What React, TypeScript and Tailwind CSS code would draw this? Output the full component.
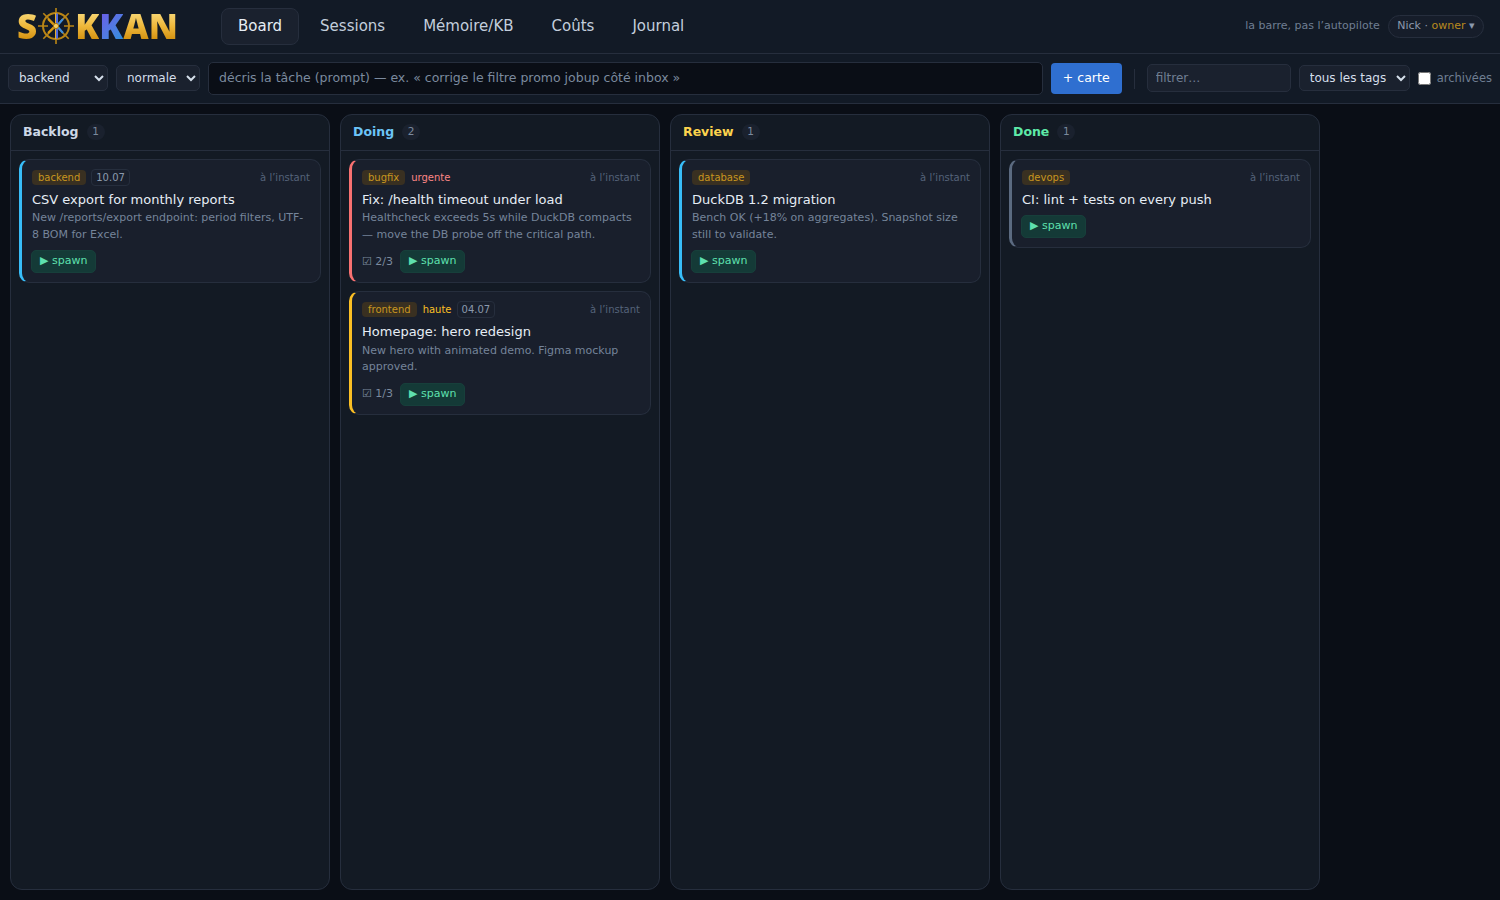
import React from "react";

const gold = "bg-gradient-to-b from-[#f7d672] via-[#eeb83a] to-[#d4930f] bg-clip-text text-transparent";

const Logo = () => (
  <div className="flex items-center w-[160px] h-[26px] text-[35px] leading-[26px] font-extrabold select-none -mt-[1px]" style={{ fontFamily: '"Open Sans", sans-serif' }}>
    <span className={`${gold} w-[22px]`}>S</span>
    <svg width="38" height="38" viewBox="0 0 38 38" className="shrink-0 -my-[6px]">
      <g stroke="#b98516" strokeWidth="1.4" fill="none">
        <circle cx="19" cy="19" r="13" strokeWidth="2" />
        <path d="M19 1v36M1 19h36M6.3 6.3l25.4 25.4M31.7 6.3L6.3 31.7" strokeWidth="1.6" />
      </g>
      <rect x="11" y="17.8" width="16" height="2.4" fill="#12192a" />
      <path d="M19 6v26" stroke="#e6ad2a" strokeWidth="2" />
      <path d="M20 6.5v25" stroke="#4f6be0" strokeWidth="2" />
      <path d="M20 19l6-7M20 19l6 7" stroke="#3d8fe0" strokeWidth="2" />
      <path d="M18 19l-7-7M18 19l-7 7" stroke="#d99a14" strokeWidth="2" />
      <circle cx="19" cy="19" r="2.6" fill="#f5cf63" stroke="#a8750f" />
    </svg>
    <span className={gold}>K</span>
    <span className="bg-gradient-to-br from-[#6a5ae8] to-[#2a8fdc] bg-clip-text text-transparent">K</span>
    <span className={gold}>AN</span>
  </div>
);

type CardT = {
  tag: string;
  prio?: string;
  prioCls?: string;
  date?: string;
  title: string;
  desc?: string;
  check?: string;
  bar: string;
};

const Card = ({ c }: { c: CardT }) => (
  <div className={`rounded-[10px] border border-[#262e3d] border-l-[3px] bg-[#191f2c] pl-[10px] pr-[10px] pt-[9px] pb-[8.8px] ${c.bar}`}>
    <div className="flex items-center gap-[6px] h-[17px] text-[10px]">
      <span className="rounded-[4px] bg-[#393021] text-[#c8961f] px-[6px] h-[15px] leading-[15px]">{c.tag}</span>
      {c.prio && <span className={c.prioCls}>{c.prio}</span>}
      {c.date && <span className="-ml-[1px] rounded-[4px] border border-[#262e3d] text-[#8b99ad] px-[4px] h-[17px] leading-[15px]">{c.date}</span>}
      <span className="ml-auto text-[#55637a]">à l’instant</span>
    </div>
    <div className="mt-[5px] text-[13px] leading-[18px] text-[#e6edf5]">{c.title}</div>
    {c.desc && <div className="mt-[1.45px] text-[11px] leading-[16.5px] text-[#75849a]">{c.desc}</div>}
    <div className={`flex items-center gap-[7px] ${c.desc ? "mt-[6.95px]" : "mt-[6px]"} -ml-[1px]`}>
      {c.check && <span className="text-[11px] text-[#7b8a9e] ml-[1px]">☑ {c.check}</span>}
      <span className="rounded-[5px] bg-[#143a37] border border-[#173f3b] text-[#5ee0ae] text-[11px] h-[23px] leading-[20px] px-[8px]">▶ spawn</span>
    </div>
  </div>
);

const Column = ({ name, color, cards }: { name: string; color: string; cards: CardT[] }) => (
  <div className="w-[320px] shrink-0 rounded-[12px] border border-[#262e3d] bg-[#131a24] flex flex-col">
    <div className="h-[36px] shrink-0 border-b border-[#262e3d] flex items-center pl-[12px] pb-[1px] gap-[8px]">
      <span className={`text-[12.5px] font-bold ${color}`}>{name}</span>
      <span className="w-[18px] h-[16px] rounded-full bg-[#1a212e] text-[#7b8a9e] text-[10.5px] leading-[14px] text-center">{cards.length}</span>
    </div>
    <div className="flex flex-col gap-[8px] p-[8px]">
      {cards.map((c) => <Card key={c.title} c={c} />)}
    </div>
  </div>
);

const selectCls = "h-[26px] mb-[1px] rounded-[5px] border border-[#262e3d] bg-[#1a212e] text-[#d5dfeb] text-[12px] pl-[6px] pb-[1px]";

export default function App() {
  return (
    <div className="min-h-[900px] h-[900px] bg-[#0a0e16] flex flex-col" style={{ fontFamily: '"DejaVu Sans", sans-serif' }}>
      <header className="h-[54px] shrink-0 bg-[#121a26] border-b border-[#262e3d] flex items-center pl-[17px] pr-[16px]">
        <Logo />
        <nav className="ml-[44px] flex items-center gap-[4px] text-[15px] text-[#c3cedc]">
          <span className="h-[37px] leading-[34px] px-[16px] rounded-[8px] bg-[#1a212e] border border-[#262e3d] text-[#e6edf5]">Board</span>
          <span className="px-[17px] pb-[1px]">Sessions</span>
          <span className="px-[17px] pb-[1px]">Mémoire/KB</span>
          <span className="px-[17px] pb-[1px]">Coûts</span>
          <span className="px-[17px] pb-[1px]">Journal</span>
        </nav>
        <span className="ml-auto text-[11px] text-[#6f7e92] pb-[1px]">la barre, pas l’autopilote</span>
        <span className="ml-[8px] h-[23px] leading-[20px] rounded-full border border-[#262e3d] bg-[#161d2a] px-[8.5px] text-[11px] text-[#8b99ad]">
          Nick · <span className="text-[#b98a1e]">owner</span> ▾
        </span>
      </header>
      <div className="h-[50px] shrink-0 bg-[#121a26] border-b border-[#262e3d] flex items-center pl-[8px] pr-[8px]">
        <select className={`${selectCls} w-[100px]`} defaultValue="backend"><option>backend</option></select>
        <select className={`${selectCls} w-[84px] ml-[8px]`} defaultValue="normale"><option>normale</option></select>
        <input readOnly className="ml-[8px] flex-1 min-w-0 h-[33px] rounded-[5px] border border-[#262e3d] bg-[#0a0e16] text-[12.5px] px-[10px] pb-[2px] placeholder:text-[#7b8a9e]" placeholder="décris la tâche (prompt) — ex. « corrige le filtre promo jobup côté inbox »" />
        <button className="ml-[8px] w-[71px] h-[31px] rounded-[4px] bg-[#2f6fd0] text-white text-[12.5px]">+ carte</button>
        <span className="ml-[12px] w-px h-[20px] bg-[#262e3d]" />
        <input readOnly className="ml-[12px] w-[144px] h-[28px] mb-[1px] rounded-[5px] border border-[#262e3d] bg-[#1a212e] text-[12px] pl-[8px] pr-[8px] pb-[0px] placeholder:text-[#6f7e92]" placeholder="filtrer…" />
        <select className={`${selectCls} w-[111px] ml-[8px]`} defaultValue="tous les tags"><option>tous les tags</option></select>
        <input type="checkbox" className="ml-[8px] w-[13px] h-[13px]" />
        <span className="ml-[6px] text-[11.5px] text-[#6f7e92]">archivées</span>
      </div>
      <main className="flex-1 min-h-0 flex gap-[10px] px-[10px] pt-[10px] pb-[10px]">
        <Column name="Backlog" color="text-[#cdd8e6]" cards={[
          { tag: "backend", date: "10.07", title: "CSV export for monthly reports", desc: "New /reports/export endpoint: period filters, UTF-8 BOM for Excel.", bar: "border-l-[#38bdf8]" },
        ]} />
        <Column name="Doing" color="text-[#6cc4f7]" cards={[
          { tag: "bugfix", prio: "urgente", prioCls: "text-[#fb8585]", title: "Fix: /health timeout under load", desc: "Healthcheck exceeds 5s while DuckDB compacts — move the DB probe off the critical path.", check: "2/3", bar: "border-l-[#f87171]" },
          { tag: "frontend", prio: "haute", prioCls: "text-[#fbbf24]", date: "04.07", title: "Homepage: hero redesign", desc: "New hero with animated demo. Figma mockup approved.", check: "1/3", bar: "border-l-[#fbbf24]" },
        ]} />
        <Column name="Review" color="text-[#fcd34d]" cards={[
          { tag: "database", title: "DuckDB 1.2 migration", desc: "Bench OK (+18% on aggregates). Snapshot size still to validate.", bar: "border-l-[#38bdf8]" },
        ]} />
        <Column name="Done" color="text-[#5eeaa8]" cards={[
          { tag: "devops", title: "CI: lint + tests on every push", bar: "border-l-[#5b6a80]" },
        ]} />
      </main>
    </div>
  );
}
